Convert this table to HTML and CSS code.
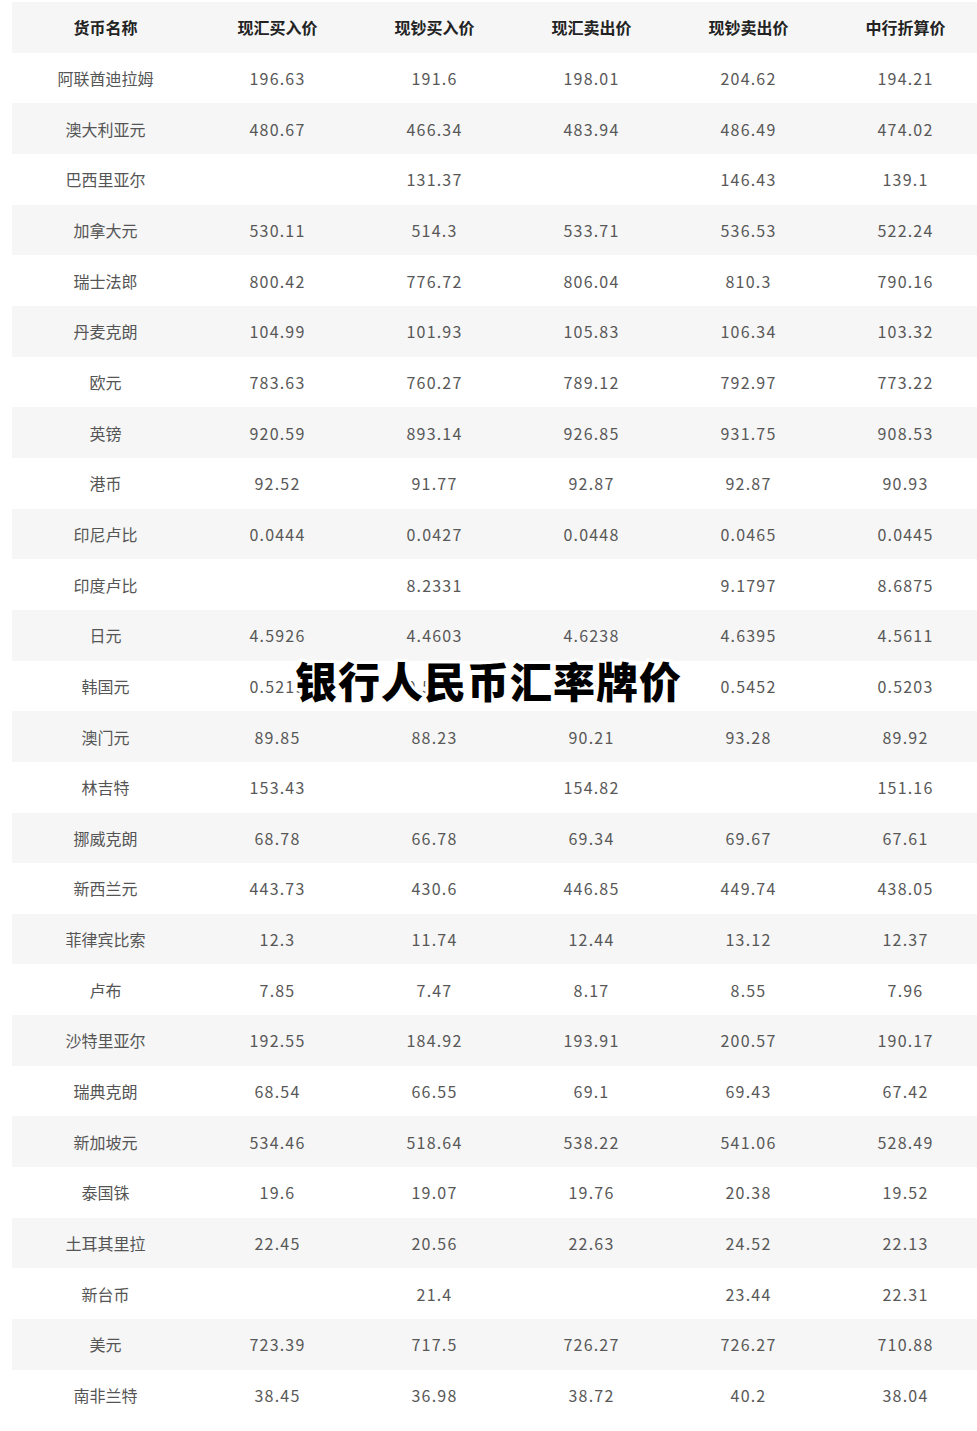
FILE: index.html
```html
<!DOCTYPE html>
<html lang="zh-CN">
<head>
<meta charset="utf-8">
<title>银行人民币汇率牌价</title>
<link rel="stylesheet" href="styles.css">
</head>
<body>
<div class="page">
  <table class="rates">
    <colgroup>
      <col class="c-name"><col class="c-num"><col class="c-num"><col class="c-num"><col class="c-num"><col class="c-num">
    </colgroup>
    <thead>
      <tr><th>货币名称</th><th>现汇买入价</th><th>现钞买入价</th><th>现汇卖出价</th><th>现钞卖出价</th><th>中行折算价</th></tr>
    </thead>
    <tbody>
      <tr><td>阿联酋迪拉姆</td><td>196.63</td><td>191.6</td><td>198.01</td><td>204.62</td><td>194.21</td></tr>
      <tr><td>澳大利亚元</td><td>480.67</td><td>466.34</td><td>483.94</td><td>486.49</td><td>474.02</td></tr>
      <tr><td>巴西里亚尔</td><td></td><td>131.37</td><td></td><td>146.43</td><td>139.1</td></tr>
      <tr><td>加拿大元</td><td>530.11</td><td>514.3</td><td>533.71</td><td>536.53</td><td>522.24</td></tr>
      <tr><td>瑞士法郎</td><td>800.42</td><td>776.72</td><td>806.04</td><td>810.3</td><td>790.16</td></tr>
      <tr><td>丹麦克朗</td><td>104.99</td><td>101.93</td><td>105.83</td><td>106.34</td><td>103.32</td></tr>
      <tr><td>欧元</td><td>783.63</td><td>760.27</td><td>789.12</td><td>792.97</td><td>773.22</td></tr>
      <tr><td>英镑</td><td>920.59</td><td>893.14</td><td>926.85</td><td>931.75</td><td>908.53</td></tr>
      <tr><td>港币</td><td>92.52</td><td>91.77</td><td>92.87</td><td>92.87</td><td>90.93</td></tr>
      <tr><td>印尼卢比</td><td>0.0444</td><td>0.0427</td><td>0.0448</td><td>0.0465</td><td>0.0445</td></tr>
      <tr><td>印度卢比</td><td></td><td>8.2331</td><td></td><td>9.1797</td><td>8.6875</td></tr>
      <tr><td>日元</td><td>4.5926</td><td>4.4603</td><td>4.6238</td><td>4.6395</td><td>4.5611</td></tr>
      <tr><td>韩国元</td><td>0.5219</td><td>0.5036</td><td>0.5261</td><td>0.5452</td><td>0.5203</td></tr>
      <tr><td>澳门元</td><td>89.85</td><td>88.23</td><td>90.21</td><td>93.28</td><td>89.92</td></tr>
      <tr><td>林吉特</td><td>153.43</td><td></td><td>154.82</td><td></td><td>151.16</td></tr>
      <tr><td>挪威克朗</td><td>68.78</td><td>66.78</td><td>69.34</td><td>69.67</td><td>67.61</td></tr>
      <tr><td>新西兰元</td><td>443.73</td><td>430.6</td><td>446.85</td><td>449.74</td><td>438.05</td></tr>
      <tr><td>菲律宾比索</td><td>12.3</td><td>11.74</td><td>12.44</td><td>13.12</td><td>12.37</td></tr>
      <tr><td>卢布</td><td>7.85</td><td>7.47</td><td>8.17</td><td>8.55</td><td>7.96</td></tr>
      <tr><td>沙特里亚尔</td><td>192.55</td><td>184.92</td><td>193.91</td><td>200.57</td><td>190.17</td></tr>
      <tr><td>瑞典克朗</td><td>68.54</td><td>66.55</td><td>69.1</td><td>69.43</td><td>67.42</td></tr>
      <tr><td>新加坡元</td><td>534.46</td><td>518.64</td><td>538.22</td><td>541.06</td><td>528.49</td></tr>
      <tr><td>泰国铢</td><td>19.6</td><td>19.07</td><td>19.76</td><td>20.38</td><td>19.52</td></tr>
      <tr><td>土耳其里拉</td><td>22.45</td><td>20.56</td><td>22.63</td><td>24.52</td><td>22.13</td></tr>
      <tr><td>新台币</td><td></td><td>21.4</td><td></td><td>23.44</td><td>22.31</td></tr>
      <tr><td>美元</td><td>723.39</td><td>717.5</td><td>726.27</td><td>726.27</td><td>710.88</td></tr>
      <tr><td>南非兰特</td><td>38.45</td><td>36.98</td><td>38.72</td><td>40.2</td><td>38.04</td></tr>
    </tbody>
  </table>
  <div class="title">银行人民币汇率牌价</div>
</div>
</body>
</html>
```

FILE: styles.css
```css
html, body {
  margin: 0;
  padding: 0;
  background: #ffffff;
  overflow: hidden;
}

body {
  font-family: "Noto Sans CJK SC", "Noto Sans", sans-serif;
}

.page {
  position: relative;
  width: 977px;
  height: 1431px;
  padding: 2px 0 0 12px;
  box-sizing: border-box;
}

.rates {
  border-collapse: collapse;
  table-layout: fixed;
  width: 972px;
}

.c-name { width: 187px; }
.c-num { width: 157px; }

.rates th,
.rates td {
  height: 50.67px;
  padding: 0;
  text-align: center;
  vertical-align: middle;
  white-space: nowrap;
}

.rates thead tr {
  background: #f6f6f6;
}

.rates th {
  font-size: 16px;
  font-weight: 700;
  color: #222222;
}

.rates td {
  font-size: 16px;
  font-weight: 400;
  color: #585858;
  letter-spacing: 1.2px;
}

.rates td:first-child {
  letter-spacing: 0;
  color: #555555;
}

.rates tbody tr:nth-child(even) {
  background: #f6f6f6;
}

.title {
  position: absolute;
  left: 0;
  right: 0;
  top: 650px;
  text-align: center;
  font-size: 42px;
  font-weight: 900;
  line-height: 60px;
  color: #000000;
  letter-spacing: 1px;
  -webkit-text-stroke: 6px #ffffff;
  paint-order: stroke fill;
}
```
